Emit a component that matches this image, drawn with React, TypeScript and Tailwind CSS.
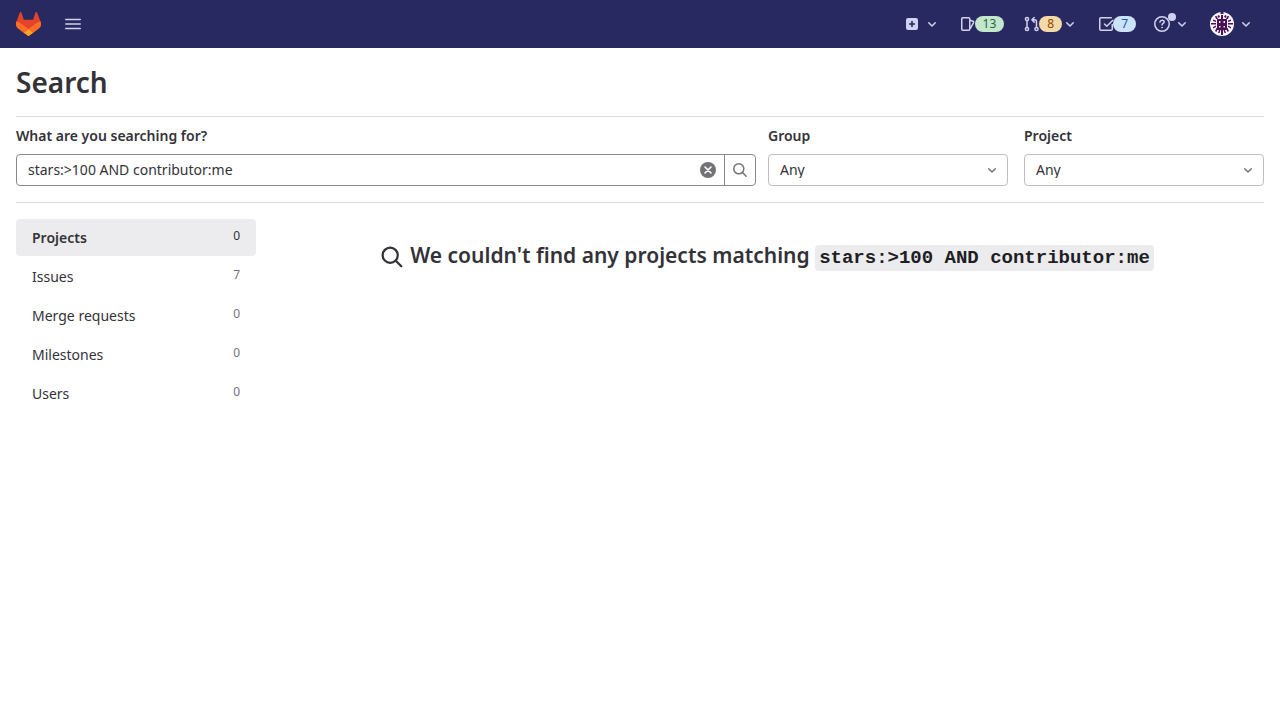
import { useState } from "react";
import type { ReactNode } from "react";

function ChevronDown({ className = "" }: { className?: string }) {
  return (
    <svg viewBox="0 0 16 16" className={`size-4 shrink-0 ${className}`} fill="currentColor" aria-hidden="true">
      <path d="M4.22 6.22a.75.75 0 0 1 1.06 0L8 8.94l2.72-2.72a.75.75 0 1 1 1.06 1.06l-3.25 3.25a.75.75 0 0 1-1.06 0L4.22 7.28a.75.75 0 0 1 0-1.06z" />
    </svg>
  );
}

function SearchIcon({ className }: { className: string }) {
  return (
    <svg viewBox="0 0 16 16" className={className} fill="none" stroke="currentColor" strokeWidth="1.5" strokeLinecap="round" aria-hidden="true">
      <circle cx="6.8" cy="6.8" r="5.05" />
      <path d="m10.5 10.5 3.7 3.7" />
    </svg>
  );
}

function Logo() {
  return (
    <svg viewBox="0 0 25 24" className="h-6 w-[25px]" aria-hidden="true">
      <path fill="#E24329" d="m24.507 9.5-.034-.09L21.082.562a.896.896 0 0 0-1.694.091l-2.29 7.01H7.825L5.535.653a.898.898 0 0 0-1.694-.09L.451 9.411.416 9.5a6.297 6.297 0 0 0 2.09 7.278l.012.01.03.022 5.16 3.867 2.56 1.935 1.554 1.176a1.051 1.051 0 0 0 1.268 0l1.555-1.176 2.56-1.935 5.197-3.89.014-.01A6.297 6.297 0 0 0 24.507 9.5Z" />
      <path fill="#FC6D26" d="m24.507 9.5-.034-.09a11.44 11.44 0 0 0-4.56 2.051l-7.447 5.632 4.742 3.584 5.197-3.89.014-.01A6.297 6.297 0 0 0 24.507 9.5Z" />
      <path fill="#FCA326" d="m7.707 20.677 2.56 1.935 1.555 1.176a1.051 1.051 0 0 0 1.268 0l1.555-1.176 2.56-1.935-4.743-3.584-4.755 3.584Z" />
      <path fill="#FC6D26" d="M5.01 11.461a11.43 11.43 0 0 0-4.56-2.05L.416 9.5a6.297 6.297 0 0 0 2.09 7.278l.012.01.03.022 5.16 3.867 4.745-3.584-7.444-5.632Z" />
    </svg>
  );
}

function LineIcon({ children }: { children: ReactNode }) {
  return (
    <svg viewBox="0 0 16 16" className="size-4 shrink-0" fill="none" stroke="currentColor" strokeWidth="1.5" strokeLinejoin="round" strokeLinecap="round" aria-hidden="true">
      {children}
    </svg>
  );
}

function Badge({ className, children }: { className: string; children: ReactNode }) {
  return <span className={`-ml-px flex h-4 items-center rounded-full px-2 text-xs leading-4 ${className}`}>{children}</span>;
}

function Avatar() {
  const half = <path d="M10.5 0H12v2h-1.5zM8 3l2 1-1 2-1.5-1zM5 4h1.5l1.5 3H6zM3 7.500l3 1v1.500L3 9zM1 11h5v1.500H1zM3 15l3-1.500V15l-3 1.500zM5 19l1.500-3H8l-1.500 4zM8 21l1-3h1.500l-1 3zM11 18h1v5h-1zM11 3h1v4h-1z" />;
  return (
    <svg viewBox="0 0 24 24" className="size-6 rounded-full" aria-hidden="true">
      <rect width="24" height="24" fill="#f8f3f8" />
      <g fill="#4b1155">
        {half}
        <g transform="matrix(-1 0 0 1 24 0)">{half}</g>
        <path d="M7 7h10v11H7z" />
      </g>
      <path fill="#f0e4f2" d="M9 9h1.500v2H9zM13.500 9H15v2h-1.500zM9 14h1.500v1.500H9zM13.500 14H15v1.500h-1.500z" />
    </svg>
  );
}

function Navbar() {
  return (
    <header className="flex h-12 items-center justify-between bg-[#292961] px-4 text-[#d1d1f0]">
      <div className="flex items-center gap-6">
        <a href="#home" aria-label="Homepage"><Logo /></a>
        <button type="button" aria-label="Main menu">
          <svg viewBox="0 0 16 16" className="size-4" stroke="currentColor" strokeWidth="1.5" strokeLinecap="round" aria-hidden="true">
            <path d="M.75 3.5h14.5M.75 8h14.5M.75 12.5h14.5" />
          </svg>
        </button>
      </div>
      <nav aria-label="User navigation" className="flex items-center pr-2.5">
        <button type="button" aria-label="Create new" className="mr-5 flex items-center gap-1">
          <svg viewBox="0 0 16 16" className="size-4" aria-hidden="true">
            <rect x="2" y="2" width="12" height="12" rx="2" fill="currentColor" />
            <path d="M8 5v6M5 8h6" stroke="#292961" strokeWidth="1.6" />
          </svg>
          <ChevronDown />
        </button>
        <a href="#issues" aria-label="13 issues" className="mr-5 flex items-center">
          <LineIcon>
            <path d="M2.75 1.75h6a1 1 0 0 1 1 1v10.500a1 1 0 0 1-1 1h-6a1 1 0 0 1-1-1V2.750a1 1 0 0 1 1-1zM10 4.300l3 1a1 1 0 0 1 .6 1.300L10.300 12.500" />
          </LineIcon>
          <Badge className="bg-[#c3e6cd] text-[#24663b]">13</Badge>
        </a>
        <button type="button" aria-label="8 merge requests" className="mr-5 flex items-center">
          <LineIcon>
            <circle cx="3" cy="3" r="1.6" />
            <circle cx="3" cy="13" r="1.6" />
            <circle cx="12.5" cy="13" r="1.6" />
            <path d="M3 4.800v6.400M12.500 11.200V5.800a2 2 0 0 0-2-2H8.300M10.200 1.500 7.900 3.800l2.300 2.300" />
          </LineIcon>
          <Badge className="bg-[#f5d9a8] text-[#8f4700]">8</Badge>
          <ChevronDown />
        </button>
        <a href="#todos" aria-label="7 to-do items" className="mr-[18px] flex items-center">
          <LineIcon>
            <path d="M14.250 8.500v4.750a1 1 0 0 1-1 1H2.750a1 1 0 0 1-1-1V2.750a1 1 0 0 1 1-1h10.500M6.500 8l2.300 2.300 6-6" />
          </LineIcon>
          <Badge className="bg-[#cbe2f9] text-[#0b5cad]">7</Badge>
        </a>
        <button type="button" aria-label="Help" className="relative mr-5 flex items-center gap-1">
          <LineIcon>
            <circle cx="8" cy="8" r="7.25" />
            <path d="M5.900 6.100c.2-1.300 1.100-1.900 2.200-1.900 1.200 0 2.100.7 2.100 1.800C10.200 7.300 8 7.400 8 9" />
            <circle cx="8" cy="11.600" r=".4" fill="currentColor" strokeWidth="1" />
          </LineIcon>
          <span className="absolute -top-[3px] left-3.5 size-2 rounded-full bg-[#d1d1f0]" />
          <ChevronDown />
        </button>
        <button type="button" aria-label="User menu" className="flex items-center gap-1">
          <Avatar />
          <ChevronDown />
        </button>
      </nav>
    </header>
  );
}

function Filter({ id, label }: { id: string; label: string }) {
  return (
    <div className="w-60 shrink-0">
      <label htmlFor={id} className="mb-2 block font-semibold">{label}</label>
      <div className="relative">
        <select id={id} className="h-8 w-full appearance-none rounded-sm border border-[#bfbfc3] bg-white px-[11px] leading-4">
          <option>Any</option>
        </select>
        <ChevronDown className="pointer-events-none absolute top-2 right-2 text-[#737278]" />
      </div>
    </div>
  );
}

const scopes = [
  { name: "Projects", count: 0 },
  { name: "Issues", count: 7 },
  { name: "Merge requests", count: 0 },
  { name: "Milestones", count: 0 },
  { name: "Users", count: 0 },
];

export default function App() {
  const [term, setTerm] = useState("stars:>100 AND contributor:me");
  return (
    <div className="min-h-screen bg-white font-['Noto_Sans',sans-serif] text-sm text-[#333238]">
      <Navbar />
      <main className="px-4">
        <h1 className="pt-4 pb-4 text-[28px] leading-9 font-semibold">Search</h1>
        <form role="search" onSubmit={(e) => e.preventDefault()} className="flex border-y border-[#dcdcde] pt-[9px] pb-4">
          <div className="mr-3 min-w-0 flex-1">
            <label htmlFor="term" className="mb-2 block font-semibold">What are you searching for?</label>
            <div className="flex h-8 rounded-sm border border-[#89888d]">
              <input id="term" value={term} onChange={(e) => setTerm(e.target.value)} className="min-w-0 flex-1 rounded-sm px-[11px] outline-none" />
              <button type="button" aria-label="Clear" onClick={() => setTerm("")} className="mr-2 text-[#737278]">
                <svg viewBox="0 0 16 16" className="size-4" aria-hidden="true">
                  <circle cx="8" cy="8" r="8" fill="currentColor" />
                  <path d="m5 5 6 6M11 5l-6 6" stroke="white" strokeWidth="1.6" strokeLinecap="round" />
                </svg>
              </button>
              <button type="submit" aria-label="Search" className="flex w-[31px] items-center justify-center border-l border-[#89888d] text-[#737278]">
                <SearchIcon className="size-4" />
              </button>
            </div>
          </div>
          <div className="flex gap-4">
            <Filter id="group" label="Group" />
            <Filter id="project" label="Project" />
          </div>
        </form>
        <div className="flex gap-4 pt-4">
          <nav aria-label="Search scopes" className="flex w-60 shrink-0 flex-col gap-0.5">
            {scopes.map((scope, index) => (
              <a key={scope.name} href={`#${scope.name}`} className={`flex justify-between rounded-sm px-4 pt-[9px] pb-2 ${index === 0 ? "bg-[#ececef] font-semibold" : ""}`}>
                <span className="leading-5">{scope.name}</span>
                <span className={`text-xs leading-4 font-normal ${index === 0 ? "" : "text-[#737278]"}`}>{scope.count}</span>
              </a>
            ))}
          </nav>
          <section className="flex min-w-0 flex-1 items-start justify-center gap-1.5 pt-6 pr-0.5">
            <SearchIcon className="mt-0.5 size-6 shrink-0" />
            <h2 className="text-[21px] leading-6 font-semibold">
              We couldn&apos;t find any projects matching{" "}
              <code className="rounded-sm bg-[#ececef] px-1 py-0.5 font-['Liberation_Mono',monospace] text-[19px] font-bold text-[#1f1e24]">{"stars:>100 AND contributor:me"}</code>
            </h2>
          </section>
        </div>
      </main>
    </div>
  );
}
